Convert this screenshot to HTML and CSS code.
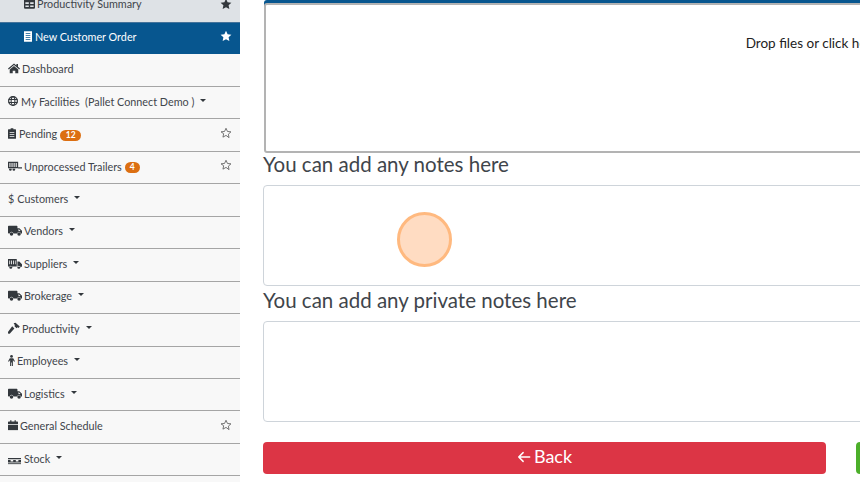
FILE: index.html
```html
<!DOCTYPE html>
<html lang="en">
<head>
    <meta charset="UTF-8">
    <title>New Customer Order</title>
    <link rel="stylesheet" href="styles.css">
</head>
<body>
    <svg class="icon-defs" aria-hidden="true">
        <symbol id="i-star" viewBox="0 0 24 24"><path d="M12 1.500l3.200 7 7.600.9-5.600 5.200 1.500 7.600L12 18.400l-6.700 3.800 1.500-7.600L1.200 9.400l7.600-.9z"/></symbol>
        <symbol id="i-star-o" viewBox="0 0 24 24"><path fill="none" stroke="currentColor" stroke-width="1.600" stroke-linejoin="round" d="M12 2.500l2.900 6.400 7 .8-5.200 4.700 1.400 6.900L12 16.800l-6.100 3.500 1.400-6.900L2.100 9.700l7-.8z"/></symbol>
        <symbol id="i-table" viewBox="0 0 16 14"><path fill-rule="evenodd" d="M1.500 0h13A1.500 1.500 0 0 1 16 1.500v11a1.500 1.500 0 0 1-1.500 1.500h-13A1.500 1.500 0 0 1 0 12.500v-11A1.500 1.500 0 0 1 1.500 0zM2 4.500V7h5V4.500zm7 0V7h5V4.500zM2 9v2.500h5V9zm7 0v2.500h5V9z"/></symbol>
        <symbol id="i-doc" viewBox="0 0 12 16"><path fill-rule="evenodd" d="M0 0h12v16H0zm2.500 3v1.300h7V3zm0 3v1.300h7V6zm0 3v1.300h7V9zm0 3v1.300h7V12z"/></symbol>
        <symbol id="i-home" viewBox="0 0 16 14"><path d="M8 .5L0 7.300l1 1.200 7-6 7 6 1-1.200-2.700-2.300V1.200h-2.100v2.200zM2.300 8.800V14h4v-3.800h3.400V14h4V8.800L8 3.900z"/></symbol>
        <symbol id="i-globe" viewBox="0 0 16 16"><circle cx="8" cy="8" r="7" fill="none" stroke="currentColor" stroke-width="2"/><ellipse cx="8" cy="8" rx="3" ry="7" fill="none" stroke="currentColor" stroke-width="1.700"/><path fill="none" stroke="currentColor" stroke-width="1.700" d="M1 5.600h14M1 10.400h14"/></symbol>
        <symbol id="i-clip" viewBox="0 0 12 16"><path fill-rule="evenodd" d="M4 0h4v1.500h3a1 1 0 0 1 1 1V15a1 1 0 0 1-1 1H1a1 1 0 0 1-1-1V2.500a1 1 0 0 1 1-1h3zM2.500 6v1.300h7V6zm0 3v1.300h7V9zm0 3v1.300h7V12z"/></symbol>
        <symbol id="i-trailer" viewBox="0 0 20 16"><path fill-rule="evenodd" d="M0 1h14.500v9.500H0zm2 2v5.500h1.500V3zm3 0v5.500h1.500V3zm3 0v5.500h1.500V3zm3 0v5.500h1.500V3zM14.500 9H20v1.800h-5.500zM1.500 11h3.800v1.200a1.900 1.900 0 1 1-3.800 0zm5 0h3.800v1.200a1.900 1.900 0 1 1-3.800 0z"/></symbol>
        <symbol id="i-truck" viewBox="0 0 20 16"><path fill-rule="evenodd" d="M1 1h11.500a1 1 0 0 1 1 1v2.500h2.800L20 8.200V12h-1.500a2.800 2.800 0 0 0-5.500 0H7.800a2.800 2.800 0 0 0-5.500 0H1a1 1 0 0 1-1-1V2a1 1 0 0 1 1-1zM15 6v2.500h3l-2.500-2.500zM5 10.300a2.500 2.500 0 1 1 0 5 2.500 2.500 0 0 1 0-5zm10.800 0a2.500 2.500 0 1 1 0 5 2.500 2.500 0 0 1 0-5z"/></symbol>
        <symbol id="i-supply" viewBox="0 0 20 16"><path fill-rule="evenodd" d="M0 1.500h12.500v10.500H0zM1.800 3.500V9H3V3.500zm2.700 0V9h1.200V3.500zm2.700 0V9h1.200V3.500zm2.700 0V9h1V3.500zM13.500 5h2.700L20 9v3.500h-6.500zM4 11a2.200 2.200 0 1 1 0 4.400A2.200 2.200 0 0 1 4 11zm11.500 0a2.200 2.200 0 1 1 0 4.400 2.200 2.200 0 0 1 0-4.400z"/></symbol>
        <symbol id="i-hammer" viewBox="0 0 16 16"><path d="M7.500 1.500l2.500-.5 5.700 5-1.700 2-1.300-.9-1.300 1.300-2.700-2.700.4-1.600zM5.600 5.700l2.900 2.900-5.900 6.600a1.600 1.600 0 0 1-2.400-2.300z"/></symbol>
        <symbol id="i-person" viewBox="0 0 10 16"><circle cx="5" cy="2" r="2"/><path d="M2.500 4.800h5L10 9l-1.200.7L7 7.300V16H5.500v-5h-1v5H3V7.300L1.200 9.700 0 9z"/></symbol>
        <symbol id="i-cal" viewBox="0 0 16 16"><path d="M3.500 0h2v2h5V0h2v2H15a1 1 0 0 1 1 1v3H0V3a1 1 0 0 1 1-1h2.500zM0 7h16v8a1 1 0 0 1-1 1H1a1 1 0 0 1-1-1z"/></symbol>
        <symbol id="i-pallet" viewBox="0 0 20 10"><path fill-rule="evenodd" d="M0 0h20v1.800H0zM0 3h4v2.500h4V3h4v2.500h4V3h4v4H0zM0 8h20v1.800H0z"/></symbol>
        <symbol id="i-arrow" viewBox="0 0 16 16"><path fill="none" stroke="currentColor" stroke-width="1.700" stroke-linecap="round" stroke-linejoin="round" d="M14.500 8H2M7 3L2 8l5 5"/></symbol>
    </svg>

    <div class="page">
        <nav class="sidebar">
            <a class="nav-sub nav-sub-grey">
                <svg class="icon ic-table"><use href="#i-table"/></svg>
                <span>Productivity Summary</span>
                <svg class="star"><use href="#i-star"/></svg>
            </a>
            <a class="nav-sub nav-sub-active">
                <svg class="icon ic-doc"><use href="#i-doc"/></svg>
                <span>New Customer Order</span>
                <svg class="star"><use href="#i-star"/></svg>
            </a>
            <a class="nav-item"><svg class="icon ic-home"><use href="#i-home"/></svg><span>Dashboard</span></a>
            <a class="nav-item"><svg class="icon ic-globe"><use href="#i-globe"/></svg><span>My Facilities &nbsp;(Pallet Connect Demo )</span><i class="caret"></i></a>
            <a class="nav-item"><svg class="icon ic-clip"><use href="#i-clip"/></svg><span>Pending</span><b class="badge">12</b><svg class="star"><use href="#i-star-o"/></svg></a>
            <a class="nav-item"><svg class="icon ic-wide"><use href="#i-trailer"/></svg><span>Unprocessed Trailers</span><b class="badge badge-one">4</b><svg class="star"><use href="#i-star-o"/></svg></a>
            <a class="nav-item"><span class="dollar">$</span><span>Customers</span><i class="caret"></i></a>
            <a class="nav-item"><svg class="icon ic-wide"><use href="#i-truck"/></svg><span>Vendors</span><i class="caret"></i></a>
            <a class="nav-item"><svg class="icon ic-wide"><use href="#i-supply"/></svg><span>Suppliers</span><i class="caret"></i></a>
            <a class="nav-item"><svg class="icon ic-wide"><use href="#i-truck"/></svg><span>Brokerage</span><i class="caret"></i></a>
            <a class="nav-item"><svg class="icon ic-hammer"><use href="#i-hammer"/></svg><span>Productivity</span><i class="caret"></i></a>
            <a class="nav-item"><svg class="icon ic-person"><use href="#i-person"/></svg><span>Employees</span><i class="caret"></i></a>
            <a class="nav-item"><svg class="icon ic-wide"><use href="#i-truck"/></svg><span>Logistics</span><i class="caret"></i></a>
            <a class="nav-item"><svg class="icon ic-cal"><use href="#i-cal"/></svg><span>General Schedule</span><svg class="star"><use href="#i-star-o"/></svg></a>
            <a class="nav-item"><svg class="icon ic-pallet"><use href="#i-pallet"/></svg><span>Stock</span><i class="caret"></i></a>
        </nav>

        <main class="content">
            <div class="dropzone">Drop files or click here</div>
            <label class="field-label">You can add any notes here</label>
            <div class="notes"></div>
            <label class="field-label">You can add any private notes here</label>
            <div class="notes"></div>
            <div class="actions">
                <button class="btn btn-back"><svg class="arrow"><use href="#i-arrow"/></svg>Back</button>
                <button class="btn btn-next"></button>
            </div>
        </main>
    </div>

    <div class="click-dot"></div>
</body>
</html>
```

FILE: styles.css
```css
html, body {
    margin: 0;
    height: 100%;
    overflow: hidden;
    background: #fff;
}
body {
    font-family: 'Lato', 'Open Sans', sans-serif;
    color: #3f454b;
}
.icon-defs {
    display: none;
}
.page {
    display: flex;
    width: 860px;
    height: 482px;
    overflow: hidden;
}

/* sidebar */
.sidebar {
    flex: 0 0 240px;
    width: 240px;
    height: 482px;
    background: #f8f8f8;
    overflow: hidden;
    font-size: 10.800px;
}
.nav-sub, .nav-item {
    display: flex;
    align-items: center;
    box-sizing: border-box;
}
.nav-sub {
    padding-left: 24px;
    padding-right: 8px;
}
.nav-sub-grey {
    height: 22px;
    background: #dee2e6;
    padding-bottom: 15px;
}
.nav-sub-active {
    height: 32px;
    background: #07568f;
    color: #fff;
    border-top: 1px solid #44739b;
    padding-bottom: 5px;
}
.nav-item {
    height: 32.450px;
    padding-left: 8px;
    padding-right: 8px;
    border-bottom: 1px solid #a5a5a5;
    padding-bottom: 3px;
}
.nav-item:nth-child(3) {
    height: 33px;
}
.icon {
    fill: currentColor;
    flex: none;
    color: #33383d;
}
.nav-sub-active .icon { color: #fff; }
.ic-table { width: 11px; height: 10px; margin-right: 2px; }
.ic-doc { width: 8px; height: 11px; margin-right: 3px; }
.ic-home { width: 12px; height: 10.500px; margin-right: 2px; }
.ic-globe { width: 10px; height: 10px; margin-right: 3px; }
.ic-clip { width: 8px; height: 11px; margin-right: 3px; }
.ic-wide { width: 14px; height: 11.200px; margin-right: 2px; }
.ic-hammer { width: 12px; height: 12px; margin-right: 2px; }
.ic-person { width: 7px; height: 11px; margin-right: 2px; }
.ic-cal { width: 10px; height: 10.500px; margin-right: 2px; }
.ic-pallet { width: 13px; height: 6.500px; margin-right: 3px; margin-top: 7px; }
.dollar {
    margin-right: 3px;
}
.caret {
    width: 0;
    height: 0;
    margin-left: 6px;
    margin-top: -2px;
    border-left: 3px solid transparent;
    border-right: 3px solid transparent;
    border-top: 3px solid #33383d;
}
.badge {
    background: #dc6f12;
    color: #fff;
    font-size: 8.500px;
    font-weight: 700;
    line-height: 11px;
    padding: 0 5.500px;
    border-radius: 6px;
    margin-left: 3px;
    margin-top: 4px;
}
.badge-one {
    padding: 0 5px;
    margin-top: 3px;
}
.star {
    width: 12px;
    height: 12px;
    fill: currentColor;
    margin-left: auto;
    color: #33383d;
}
.nav-item .star {
    color: #555;
    margin-top: -2px;
}
.nav-sub-active .star {
    color: #fff;
}

/* form column, runs past the right edge of the window */
.content {
    flex: 0 0 1120px;
    min-width: 0;
    box-sizing: border-box;
    padding-left: 23px;
}
.dropzone {
    box-sizing: border-box;
    margin: 3px 0 0 1px;
    width: 1096px;
    height: 150px;
    background: #fff;
    border: 2px solid #b3b3b3;
    border-radius: 3px;
    box-shadow: 0 -3px 0 #07568f;
    color: #222;
    font-size: 13.500px;
    text-align: center;
    padding-top: 30px;
}
.field-label {
    display: block;
    font-size: 20.500px;
    line-height: 22px;
    color: #3f454b;
    height: 32px;
}
.notes {
    box-sizing: border-box;
    height: 101px;
    background: #fff;
    border: 1px solid #ced4da;
    border-radius: 4px;
    margin-bottom: 3px;
}
.actions {
    display: flex;
    gap: 30px;
    margin-top: 20px;
}
.btn {
    width: 563px;
    height: 32px;
    flex: none;
    border: none;
    border-radius: 4px;
    color: #fff;
    font-family: inherit;
    font-size: 18px;
    padding: 0 0 4px;
}
.btn-back {
    background: #dc3545;
}
.btn-next {
    background: #4caf2a;
}
.arrow {
    width: 14px;
    height: 14px;
    margin-right: 3px;
    vertical-align: -1px;
}

/* click marker from the recording */
.click-dot {
    position: absolute;
    left: 397px;
    top: 212px;
    box-sizing: border-box;
    width: 55px;
    height: 55px;
    border-radius: 50%;
    background: #ffdcc2;
    border: 3px solid #ffb97f;
}
```
